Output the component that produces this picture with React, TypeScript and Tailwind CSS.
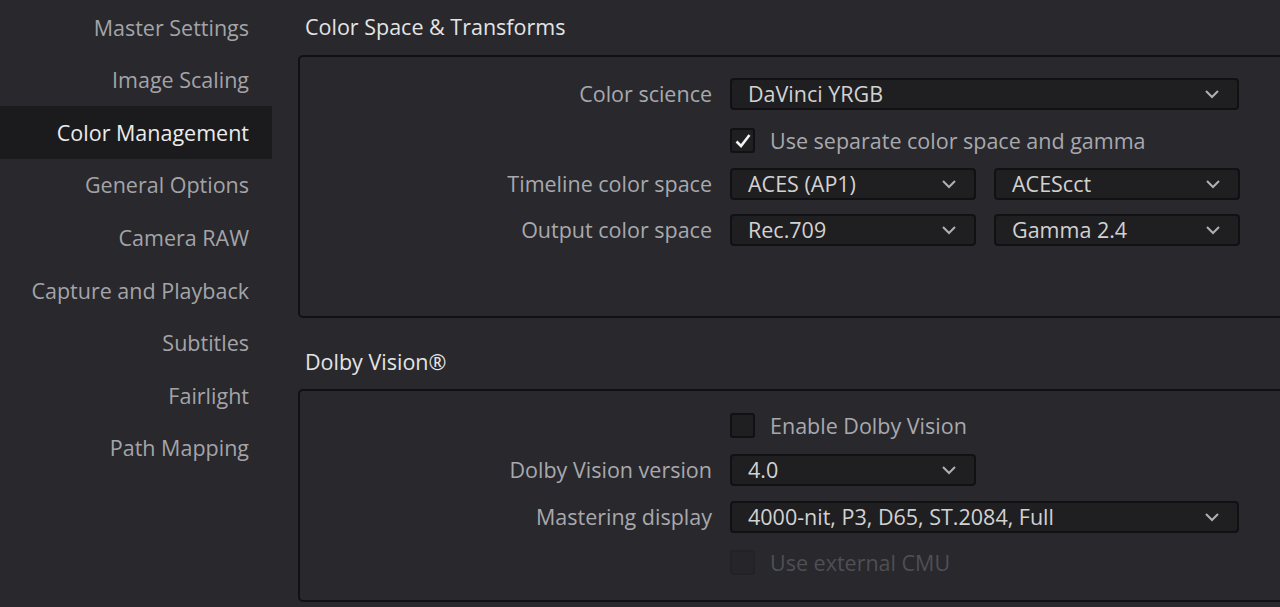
const navItems = [
  "Master Settings",
  "Image Scaling",
  "Color Management",
  "General Options",
  "Camera RAW",
  "Capture and Playback",
  "Subtitles",
  "Fairlight",
  "Path Mapping",
];

function Chevron() {
  return (
    <svg width="16" height="10" viewBox="0 0 16 10" className="shrink-0">
      <path d="M2 2 L8 8 L14 2" fill="none" stroke="#b0b0b0" strokeWidth="2" />
    </svg>
  );
}

function Select({ value, wide }: { value: string; wide?: boolean }) {
  return (
    <div
      className={`${wide ? "w-[509px]" : "w-[246px]"} h-[32px] flex items-center justify-between pl-[16px] pr-[17px] bg-[#1f1f21] border-2 border-[#111113] rounded-[4px] text-[#d2d2d2]`}
    >
      <span>{value}</span>
      <Chevron />
    </div>
  );
}

function Checkbox({ checked, disabled }: { checked?: boolean; disabled?: boolean }) {
  return (
    <div
      className={`w-[25px] h-[25px] rounded-[3px] border-2 flex items-center justify-center ${
        disabled ? "border-[#232327] bg-[#26262a]" : "border-[#111113] bg-[#1f1f21]"
      }`}
    >
      {checked && (
        <svg width="18" height="16" viewBox="0 0 18 16">
          <path d="M2.5 8.5 L7 13 L15.5 2" fill="none" stroke="#f2f2f2" strokeWidth="2.6" />
        </svg>
      )}
    </div>
  );
}

function Row({ label, children, className = "" }: { label?: string; children: React.ReactNode; className?: string }) {
  return (
    <div className={`flex items-center ${className}`}>
      <div className="w-[430px] pr-[18px] text-right text-[#a9a9ad] whitespace-nowrap">{label}</div>
      <div className="flex items-center gap-[18px]">{children}</div>
    </div>
  );
}

export default function App() {
  return (
    <div
      className="w-[1280px] h-[607px] overflow-hidden bg-[#28282d] flex text-[21.5px] leading-none"
      style={{ fontFamily: '"Open Sans", "Noto Sans", sans-serif' }}
    >
      <nav className="w-[272px] shrink-0 flex flex-col pt-[1px]">
        {navItems.map((item) => {
          const active = item === "Color Management";
          return (
            <div
              key={item}
              className={`h-[52.6px] flex items-center justify-end pr-[23px] whitespace-nowrap ${
                active ? "bg-[#1b1b1e] text-[#ececec]" : "text-[#a4a4a8]"
              }`}
            >
              {item}
            </div>
          );
        })}
      </nav>

      <main className="flex-1 flex flex-col pl-[26px]">
        <h2 className="h-[55px] flex items-center pl-[7px] pb-[2px] text-[#e4e4e4]">Color Space &amp; Transforms</h2>
        <section className="h-[263px] -mr-[10px] border-2 border-[#111113] rounded-[5px] flex flex-col pt-[21px]">
          <Row label="Color science">
            <Select value="DaVinci YRGB" wide />
          </Row>
          <div className="flex items-center mt-[18px] pl-[430px] gap-[15px] text-[#a9a9ad]">
            <Checkbox checked />
            <span>Use separate color space and gamma</span>
          </div>
          <Row label="Timeline color space" className="mt-[15px]">
            <Select value="ACES (AP1)" />
            <Select value="ACEScct" />
          </Row>
          <Row label="Output color space" className="mt-[14px]">
            <Select value="Rec.709" />
            <Select value="Gamma 2.4" />
          </Row>
        </section>

        <h2 className="h-[71px] flex items-center pl-[7px] pt-[16px] text-[#e4e4e4]">Dolby Vision®</h2>
        <section className="h-[213px] -mr-[10px] border-2 border-[#111113] rounded-[5px] flex flex-col pt-[22px]">
          <div className="flex items-center pl-[430px] gap-[15px] text-[#a9a9ad]">
            <Checkbox />
            <span>Enable Dolby Vision</span>
          </div>
          <Row label="Dolby Vision version" className="mt-[16px]">
            <Select value="4.0" />
          </Row>
          <Row label="Mastering display" className="mt-[15px]">
            <Select value="4000-nit, P3, D65, ST.2084, Full" wide />
          </Row>
          <div className="flex items-center mt-[17px] pl-[430px] gap-[15px] text-[#4f4f54]">
            <Checkbox disabled />
            <span>Use external CMU</span>
          </div>
        </section>
      </main>
    </div>
  );
}
